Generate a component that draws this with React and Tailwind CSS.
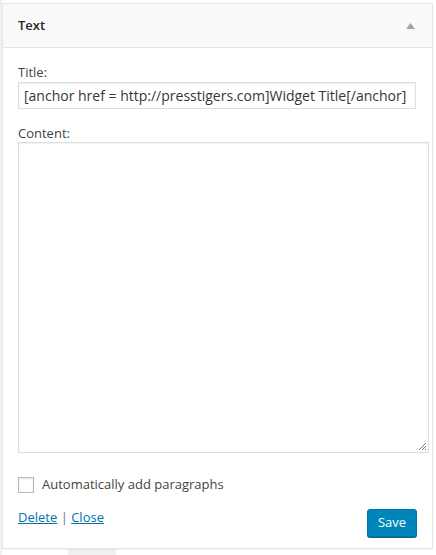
import React from "react";

export default function App() {
  return (
    <div
      className="w-[436px] h-[555px] bg-white overflow-hidden relative"
      style={{ fontFamily: '"Open Sans", "Liberation Sans", sans-serif' }}
    >
      <div className="absolute left-0 top-0 w-[2px] h-full bg-[#f1f1f1]" />
      <div className="absolute left-[68px] bottom-0 w-[48px] h-[6px] bg-[#f1f1f1]" />
      <div className="relative ml-[2px] mt-[3px] w-[431px] h-[546px] border border-[#e5e5e5] bg-white shadow-[0_1px_1px_rgba(0,0,0,0.04)]">
        <div className="h-[44px] bg-[#fafafa] border-b border-[#e5e5e5] flex items-center justify-between pl-[15px] pr-[17px]">
          <span className="text-[13px] font-semibold text-[#23282d]">Text</span>
          <svg width="9" height="6" viewBox="0 0 9 6">
            <path d="M0 6 L4.5 0 L9 6 Z" fill="#a0a5aa" />
          </svg>
        </div>
        <div className="pl-[15px] pt-[15px]">
          <div className="text-[13px] text-[#444] leading-[18px]">Title:</div>
          <div className="mt-[1px] w-[398px] h-[27px] border border-[#ddd] shadow-[inset_0_1px_2px_rgba(0,0,0,0.07)] flex items-center px-[5px] text-[14px] text-[#32373c] whitespace-nowrap overflow-hidden">
            [anchor href = http://presstigers.com]Widget Title[/anchor]
          </div>
          <div className="mt-[15px] text-[13px] text-[#444] leading-[18px]">Content:</div>
          <div className="w-[411px] h-[311px] border border-[#ddd] shadow-[inset_0_1px_2px_rgba(0,0,0,0.07)] relative">
            <svg className="absolute right-[1px] bottom-[1px]" width="9" height="9" viewBox="0 0 9 9">
              <path d="M8 1 L1 8 M8 4 L4 8 M8 7 L7 8" stroke="#777" strokeWidth="1" />
            </svg>
          </div>
          <div className="mt-[22px] flex items-center">
            <div className="w-[16px] h-[16px] border border-[#b4b9be] shadow-[inset_0_1px_2px_rgba(0,0,0,0.1)] bg-white" />
            <span className="ml-[8px] text-[13px] text-[#444]">Automatically add paragraphs</span>
          </div>
          <div className="mt-[13px] flex items-start justify-between pr-[15px]">
            <div className="text-[13px] text-[#0073aa] leading-[18px]">
              <span className="underline">Delete</span>
              <span className="text-[#72777c]"> | </span>
              <span className="underline">Close</span>
            </div>
            <button className="mt-[1px] w-[50px] h-[28px] rounded-[3px] bg-[#0085ba] border border-[#0073aa] text-white text-[13px] shadow-[0_1px_0_#006799]">
              Save
            </button>
          </div>
        </div>
      </div>
    </div>
  );
}
